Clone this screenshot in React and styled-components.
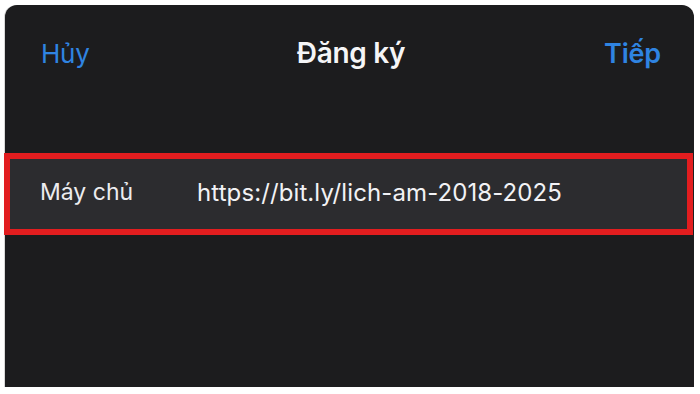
import React from 'react';
import styled, { createGlobalStyle } from 'styled-components';

const GlobalStyle = createGlobalStyle`
  html, body {
    margin: 0;
    padding: 0;
    background: #ffffff;
  }
  body {
    font-family: Inter, "Noto Sans", "Liberation Sans", sans-serif;
    -webkit-font-smoothing: antialiased;
  }
`;

const Sheet = styled.div`
  margin: 5px 6px 0 5px;
  width: 689px;
  height: 382px;
  background-color: #1c1c1e;
  border-radius: 12px 12px 0 0;
  box-shadow: -1px 0 0 #d8d8d8;
  display: flex;
  flex-direction: column;
`;

const NavBar = styled.div`
  display: grid;
  grid-template-columns: 1fr auto 1fr;
  align-items: center;
  height: 96px;
  padding: 0 33px 0 36px;
  box-sizing: border-box;
`;

const NavButton = styled.button`
  background: none;
  border: none;
  padding: 0;
  margin: 0;
  font-family: inherit;
  font-size: ${props => (props.bold ? '27px' : '26px')};
  font-weight: ${props => (props.bold ? 600 : 400)};
  color: #2f84e2;
  justify-self: ${props => (props.right ? 'end' : 'start')};
  cursor: pointer;
  letter-spacing: -0.2px;
`;

const Title = styled.h1`
  margin: 0;
  font-size: 28px;
  font-weight: 600;
  color: #f5f5f7;
  letter-spacing: -0.3px;
`;

const Spacer = styled.div`
  height: 52px;
`;

const Highlight = styled.div`
  margin-left: -1px;
  width: 689px;
  height: 82px;
  box-sizing: border-box;
  border: 6px solid #e21d1f;
  display: flex;
`;

const FieldRow = styled.div`
  flex: 1;
  display: flex;
  align-items: center;
  background-color: #2c2c2f;
  padding: 0 0 4px 30px;
`;

const FieldLabel = styled.span`
  width: 157px;
  font-size: 23px;
  color: #ececef;
  letter-spacing: 0;
`;

const FieldValue = styled.span`
  font-size: 24px;
  color: #f2f2f5;
  letter-spacing: 0.1px;
`;

export default function App() {
  return (
    <>
      <GlobalStyle />
      <Sheet>
        <NavBar>
          <NavButton>Hủy</NavButton>
          <Title>Đăng ký</Title>
          <NavButton right bold>Tiếp</NavButton>
        </NavBar>
        <Spacer />
        <Highlight>
          <FieldRow>
            <FieldLabel>Máy chủ</FieldLabel>
            <FieldValue>https://bit.ly/lich-am-2018-2025</FieldValue>
          </FieldRow>
        </Highlight>
      </Sheet>
    </>
  );
}
